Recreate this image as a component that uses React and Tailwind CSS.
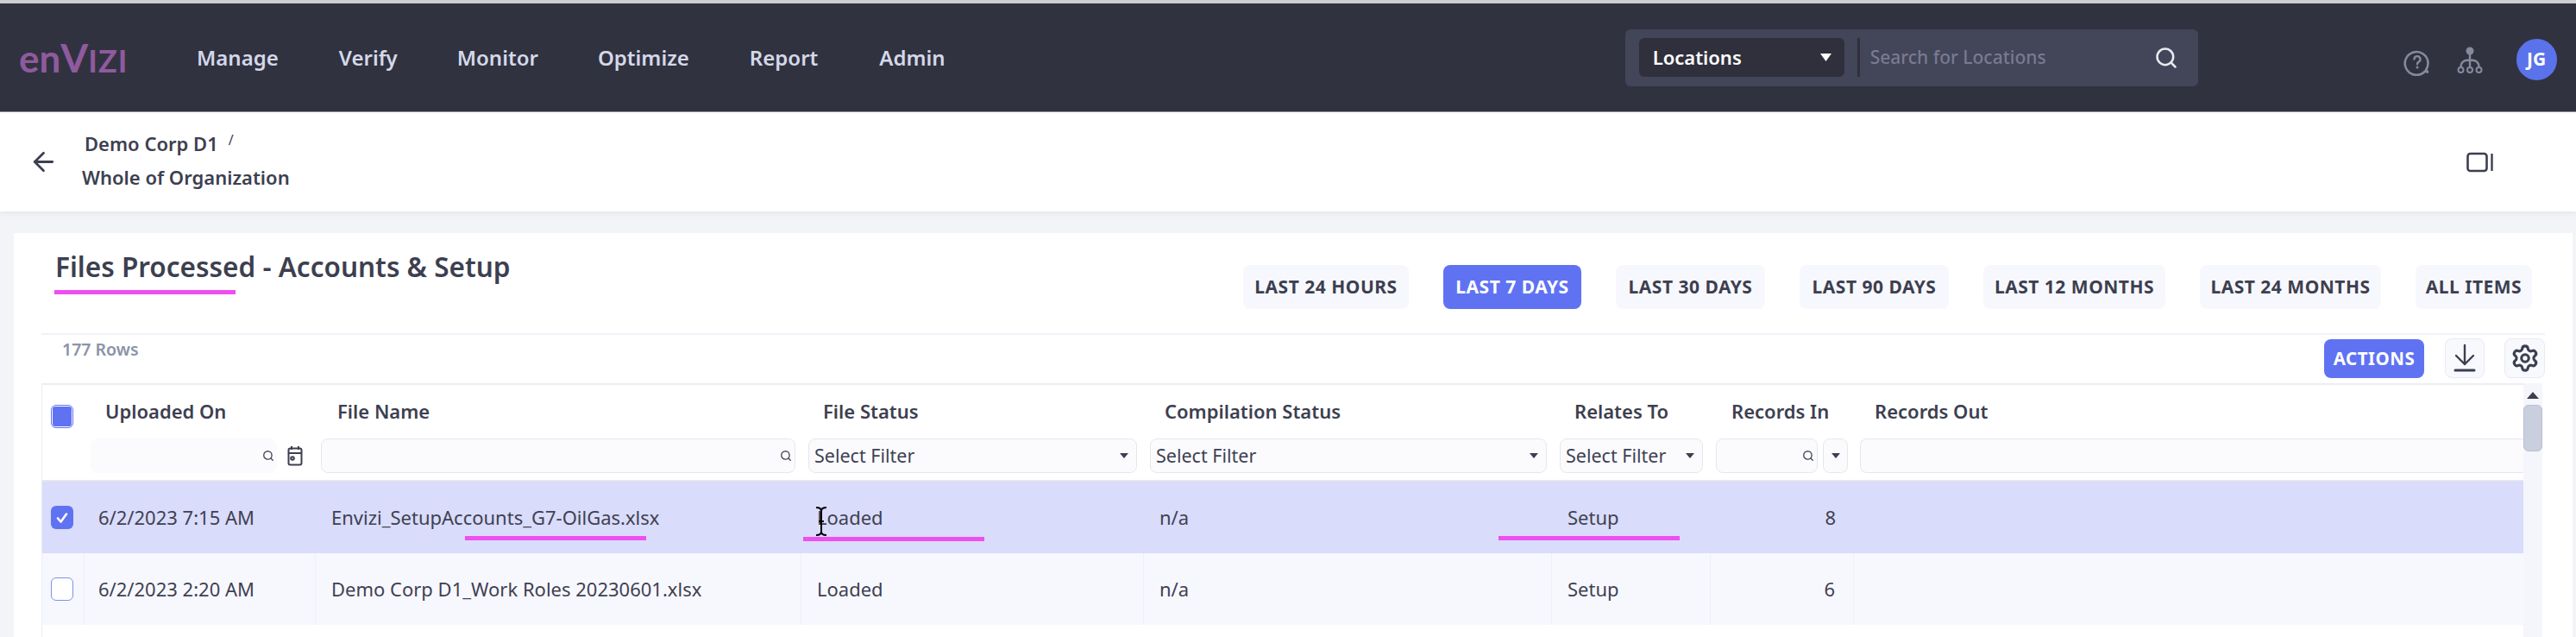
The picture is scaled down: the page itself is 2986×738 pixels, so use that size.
import React from "react";
import { Search, ArrowLeft, Settings } from "lucide-react";

const NAV = [
  ["Manage", "ml-[78px]"],
  ["Verify", "ml-[70px]"],
  ["Monitor", "ml-[69px]"],
  ["Optimize", "ml-[69px]"],
  ["Report", "ml-[70px]"],
  ["Admin", "ml-[71px]"],
];
const RANGES = [
  ["LAST 24 HOURS", "w-[192px]", false],
  ["LAST 7 DAYS", "w-[160px]", true],
  ["LAST 30 DAYS", "w-[173px]", false],
  ["LAST 90 DAYS", "w-[173px]", false],
  ["LAST 12 MONTHS", "w-[211px]", false],
  ["LAST 24 MONTHS", "w-[210px]", false],
  ["ALL ITEMS", "w-[135px]", false],
];
const COLS = "grid grid-cols-[49px_268px_563px_397px_473px_184px_166px_777px]";

function Caret({ className = "" }) {
  return (
    <svg width="12" height="8" viewBox="0 0 12 8" className={className}>
      <path d="M1 1h10L6 7z" fill="#3d3f50" />
    </svg>
  );
}

function Check({ state }) {
  if (state === "checked") {
    return (
      <span className="flex h-[27px] w-[26px] items-center justify-center rounded-[6px] bg-[#5f73f2]">
        <svg width="18" height="18" viewBox="0 0 18 18" fill="none" stroke="#fff" strokeWidth="2.6" strokeLinecap="round" strokeLinejoin="round">
          <path d="M4 9.5l3.5 4L14 4.5" />
        </svg>
      </span>
    );
  }
  if (state === "mixed") {
    return (
      <span className="flex h-[27px] w-[26px] items-center justify-center rounded-[6px] border border-[#5f73f2] bg-white">
        <span className="h-[23px] w-[22px] rounded-[3px] bg-[#5f73f2]" />
      </span>
    );
  }
  return <span className="h-[27px] w-[26px] rounded-[6px] border border-[#7f8ff0] bg-white" />;
}

function FilterBox({ className = "", children }) {
  return (
    <div className={`flex h-[40px] items-center rounded-lg border border-[#e6e7ee] bg-[#fbfbfe] ${className}`}>
      {children}
    </div>
  );
}

function SelectFilter({ width, ml }) {
  return (
    <FilterBox className={`${width} ${ml} justify-between pl-[6px] pr-[8px]`}>
      <span className="text-[21.5px] text-[#3f4152]">Select Filter</span>
      <Caret />
    </FilterBox>
  );
}

function SmallSearch({ className = "" }) {
  return <Search size={14} strokeWidth={2.4} color="#4a4c5c" className={className} />;
}

function Row({ selected, check, date, file, status, comp, rel, rec }) {
  const line = selected ? "" : "border-r border-[#eff0f8]";
  return (
    <div className={`${COLS} h-[83px] items-stretch text-[22px] text-[#3f4152] ${selected ? "bg-[#d9dcfa]" : "bg-[#f7f8fe]"}`}>
      <div className={`flex items-center pl-[10px] ${line}`}><Check state={check} /></div>
      <div className={`flex items-center pl-[16px] ${line}`}>{date}</div>
      <div className={`flex items-center pl-[18px] ${line}`}>{file}</div>
      <div className={`flex items-center pl-[18px] ${line}`}>{status}</div>
      <div className={`flex items-center pl-[18px] ${line}`}>{comp}</div>
      <div className={`flex items-center pl-[18px] ${line}`}>{rel}</div>
      <div className={`flex items-center justify-end pr-[21px] ${line}`}>{rec}</div>
      <div />
    </div>
  );
}

function Mark({ className }) {
  return <span className={`absolute h-[5px] w-[210px] bg-[#ee4ff0] ${className}`} />;
}

export default function App() {
  return (
    <div className="relative h-[738px] w-full overflow-hidden bg-[#f3f4f7] font-['Noto_Sans',sans-serif]">
      <div className="h-[4px] bg-[#cfcfcf]" />
      <header className="flex h-[126px] items-center border-b border-[#8d8f99] bg-[#31323f]">
        <div className="ml-[22px] flex h-[44px] w-[128px] items-baseline whitespace-nowrap font-['Lato',sans-serif] font-bold text-[#8f5a9e]">
          <span className="text-[44px] leading-[44px]">en</span>
          <span className="text-[46px] leading-[44px]">V</span>
          <span className="text-[36px] leading-[44px] tracking-[1px]">IZI</span>
        </div>
        {NAV.map(([t, m]) => (
          <span key={t} className={`${m} text-[24px] font-semibold text-[#d4d8ea]`}>{t}</span>
        ))}
        <div className="ml-[788px] flex h-[66px] w-[664px] items-center rounded-md bg-[#434559] pl-[16px]">
          <div className="flex h-[45px] w-[238px] items-center justify-between rounded-md bg-[#2f303c] pl-[16px] pr-[15px] text-[22px] font-semibold text-white">
            <span>Locations</span>
            <svg width="13" height="9" viewBox="0 0 13 9"><path d="M0 0h13L6.500 9z" fill="#fff" /></svg>
          </div>
          <span className="ml-[15px] h-[45px] w-[3px] bg-[#2f303c]" />
          <span className="ml-[12px] w-[330px] text-[21px] font-medium text-[#787b90]">Search for Locations</span>
          <Search size={28} color="#e8e9f0" strokeWidth={2.2} className="ml-[-1px]" />
        </div>
        <svg width="32" height="32" viewBox="0 0 32 32" fill="none" className="ml-[238px] mt-[10px]">
          <path d="M28 27.500l-3-1a13.400 13.400 0 1 1 3.500-9.500c0 3-.8 5.500-2.300 7.500z" stroke="#858a9d" strokeWidth="2.600" strokeLinejoin="round" />
          <path d="M12.500 12.500a3.500 3.500 0 1 1 5 3.300c-1 .6-1.500 1.200-1.500 2.500" stroke="#858a9d" strokeWidth="2.400" strokeLinecap="round" />
          <circle cx="16" cy="22" r="1.500" fill="#858a9d" />
        </svg>
        <svg width="30" height="32" viewBox="0 0 30 32" fill="none" className="ml-[30px] mt-[6px]">
          <circle cx="15" cy="5" r="4.500" fill="#858a9d" />
          <path d="M15 8v16M4.500 24c0-6 3-8.500 10.500-8.500S25.500 18 25.500 24" stroke="#858a9d" strokeWidth="2.400" />
          <circle cx="4.500" cy="27" r="3" stroke="#858a9d" strokeWidth="2" />
          <circle cx="15" cy="27" r="3" stroke="#858a9d" strokeWidth="2" />
          <circle cx="25.500" cy="27" r="3" stroke="#858a9d" strokeWidth="2" />
        </svg>
        <span className="ml-[39px] mt-[5px] flex h-[48px] w-[47px] items-center justify-center rounded-full bg-[#5a72ea] text-[21px] font-bold text-white">JG</span>
      </header>

      <div className="flex h-[115px] items-center bg-white pl-[33px] shadow-[0_2px_6px_rgba(60,60,80,0.08)]">
        <ArrowLeft size={35} color="#3d3f50" strokeWidth={1.9} />
        <div className="ml-[27px] mt-[-4px] flex w-[240px] flex-col whitespace-nowrap text-[22px] font-semibold text-[#3d3f50]">
          <div className="mb-[10px] ml-[3px] flex items-start leading-[29px]">
            <span>Demo Corp D1</span>
            <span className="ml-[12px] text-[16px] font-normal leading-[20px]">/</span>
          </div>
          <span className="leading-[29px]">Whole of Organization</span>
        </div>
        <svg width="32" height="24" viewBox="0 0 32 24" fill="none" className="ml-[2524px]">
          <rect x="1.500" y="2" width="22" height="20" rx="3" stroke="#3d3f50" strokeWidth="2.600" />
          <path d="M29.500 2v20" stroke="#3d3f50" strokeWidth="2.400" />
        </svg>
      </div>

      <main className="mb-0 ml-[16px] mr-[4px] mt-[25px] h-[500px] bg-white pl-[32px]">
        <div className="flex h-[118px] w-[2902px] items-start justify-between border-b-2 border-[#f1f2f8] pr-[15px]">
          <h1 className="ml-[16px] mt-[15px] text-[31.5px] font-semibold leading-[48px] text-[#3d3f50]">Files Processed - Accounts &amp; Setup</h1>
          <div className="mt-[37px] flex gap-[40px]">
            {RANGES.map(([t, w, on]) => (
              <button
                key={t}
                className={`${w} flex h-[51px] items-center justify-center rounded-lg pt-[1px] text-[21px] font-bold tracking-[0.5px] ${on ? "bg-[#5f73f2] text-white" : "bg-[#f7f8fd] text-[#3d3f50]"}`}
              >
                {t}
              </button>
            ))}
          </div>
        </div>

        <div className="flex h-[56px] w-[2902px] items-start justify-between">
          <span className="ml-[24px] mt-[3px] text-[19.5px] font-semibold leading-[28px] text-[#8a93a8]">177 Rows</span>
          <div className="mt-[4px] flex items-start">
            <button className="mt-[1px] flex h-[45px] w-[116px] items-center justify-center rounded-lg bg-[#5f73f2] text-[20.5px] font-bold tracking-[0.5px] text-white">ACTIONS</button>
            <button className="ml-[24px] flex h-[46px] w-[46px] items-center justify-center rounded-lg border border-[#e9eaf3] bg-[#f8f9fd]">
              <svg width="26" height="34" viewBox="0 0 26 34" fill="none" stroke="#3d3f50" strokeWidth="2.400" strokeLinecap="round" strokeLinejoin="round">
                <path d="M13 2v22M3 14l10 10 10-10" />
                <path d="M2 31h22" strokeWidth="3" />
              </svg>
            </button>
            <button className="ml-[23px] flex h-[46px] w-[47px] items-center justify-center rounded-lg border border-[#e9eaf3] bg-[#f8f9fd]">
              <Settings size={34} color="#3d3f50" strokeWidth={2.2} />
            </button>
          </div>
        </div>

        <div className="flex w-[2899px] items-start">
          <div className="h-[294px] w-[2877px] border-l border-t-2 border-[#eceef6] bg-white">
            <div className={`${COLS} h-[62px] text-[22px] font-semibold text-[#3d3f50]`}>
              <div className="flex items-center pl-[10px] pt-[10px]"><Check state="mixed" /></div>
              <div className="flex items-center pb-[2px] pl-[24px]">Uploaded On</div>
              <div className="flex items-center pb-[2px] pl-[25px]">File Name</div>
              <div className="flex items-center pb-[2px] pl-[25px]">File Status</div>
              <div className="flex items-center pb-[2px] pl-[24px]">Compilation Status</div>
              <div className="flex items-center pb-[2px] pl-[26px]">Relates To</div>
              <div className="flex items-center pb-[2px] pl-[24px]">Records In</div>
              <div className="flex items-center pb-[2px] pl-[24px]">Records Out</div>
            </div>
            <div className={`${COLS} h-[50px] items-start border-b-2 border-[#e6e7ee]`}>
              <div />
              <div className="flex items-center">
                <div className="ml-[7px] flex h-[40px] w-[216px] items-center justify-end rounded-lg bg-[#fbfbfe] pr-[3px]"><SmallSearch /></div>
                <svg width="18" height="24" viewBox="0 0 18 24" fill="none" stroke="#3d3f50" strokeWidth="2" className="ml-[12px]">
                  <rect x="1.500" y="3.500" width="15" height="19" rx="2" />
                  <path d="M1.500 9h15M5 1v4M13 1v4" />
                  <circle cx="6" cy="15" r="1.800" />
                </svg>
              </div>
              <div><FilterBox className="ml-[6px] w-[550px] justify-end pr-[3px]"><SmallSearch /></FilterBox></div>
              <div><SelectFilter width="w-[381px]" ml="ml-[8px]" /></div>
              <div><SelectFilter width="w-[460px]" ml="ml-[7px]" /></div>
              <div><SelectFilter width="w-[166px]" ml="ml-[9px]" /></div>
              <div className="flex">
                <FilterBox className="ml-[6px] w-[118px] justify-end pr-[3px]"><SmallSearch /></FilterBox>
                <FilterBox className="ml-[6px] w-[29px] justify-center"><Caret /></FilterBox>
              </div>
              <div><FilterBox className="ml-[7px] w-[770px] rounded-r-none border-r-0" /></div>
            </div>
            <Row selected check="checked" date="6/2/2023 7:15 AM" file="Envizi_SetupAccounts_G7-OilGas.xlsx" status="Loaded" comp="n/a" rel="Setup" rec="8" />
            <Row check="empty" date="6/2/2023 2:20 AM" file="Demo Corp D1_Work Roles 20230601.xlsx" status="Loaded" comp="n/a" rel="Setup" rec="6" />
          </div>
          <div className="flex h-[294px] w-[22px] flex-col items-center bg-[#f5f6fc]">
            <svg width="14" height="8" viewBox="0 0 14 8" className="mt-[10px]"><path d="M0 8L7 0l7 8z" fill="#3d3f50" /></svg>
            <span className="mt-[7px] h-[54px] w-full rounded-md border border-[#b9bfcf] bg-[#c9cfde]" />
          </div>
        </div>
      </main>

      <Mark className="left-[63px] top-[336px]" />
      <Mark className="left-[539px] top-[621px]" />
      <Mark className="left-[931px] top-[622px]" />
      <Mark className="left-[1737px] top-[621px]" />
      <svg width="16" height="34" viewBox="0 0 16 34" fill="none" stroke="#000" strokeWidth="2" className="absolute left-[944px] top-[587px]">
        <path d="M2 1c3 0 6 1 6 4v24c0 3-3 4-6 4M14 1c-3 0-6 1-6 4v24c0 3 3 4 6 4M5 17h6" />
      </svg>
    </div>
  );
}
